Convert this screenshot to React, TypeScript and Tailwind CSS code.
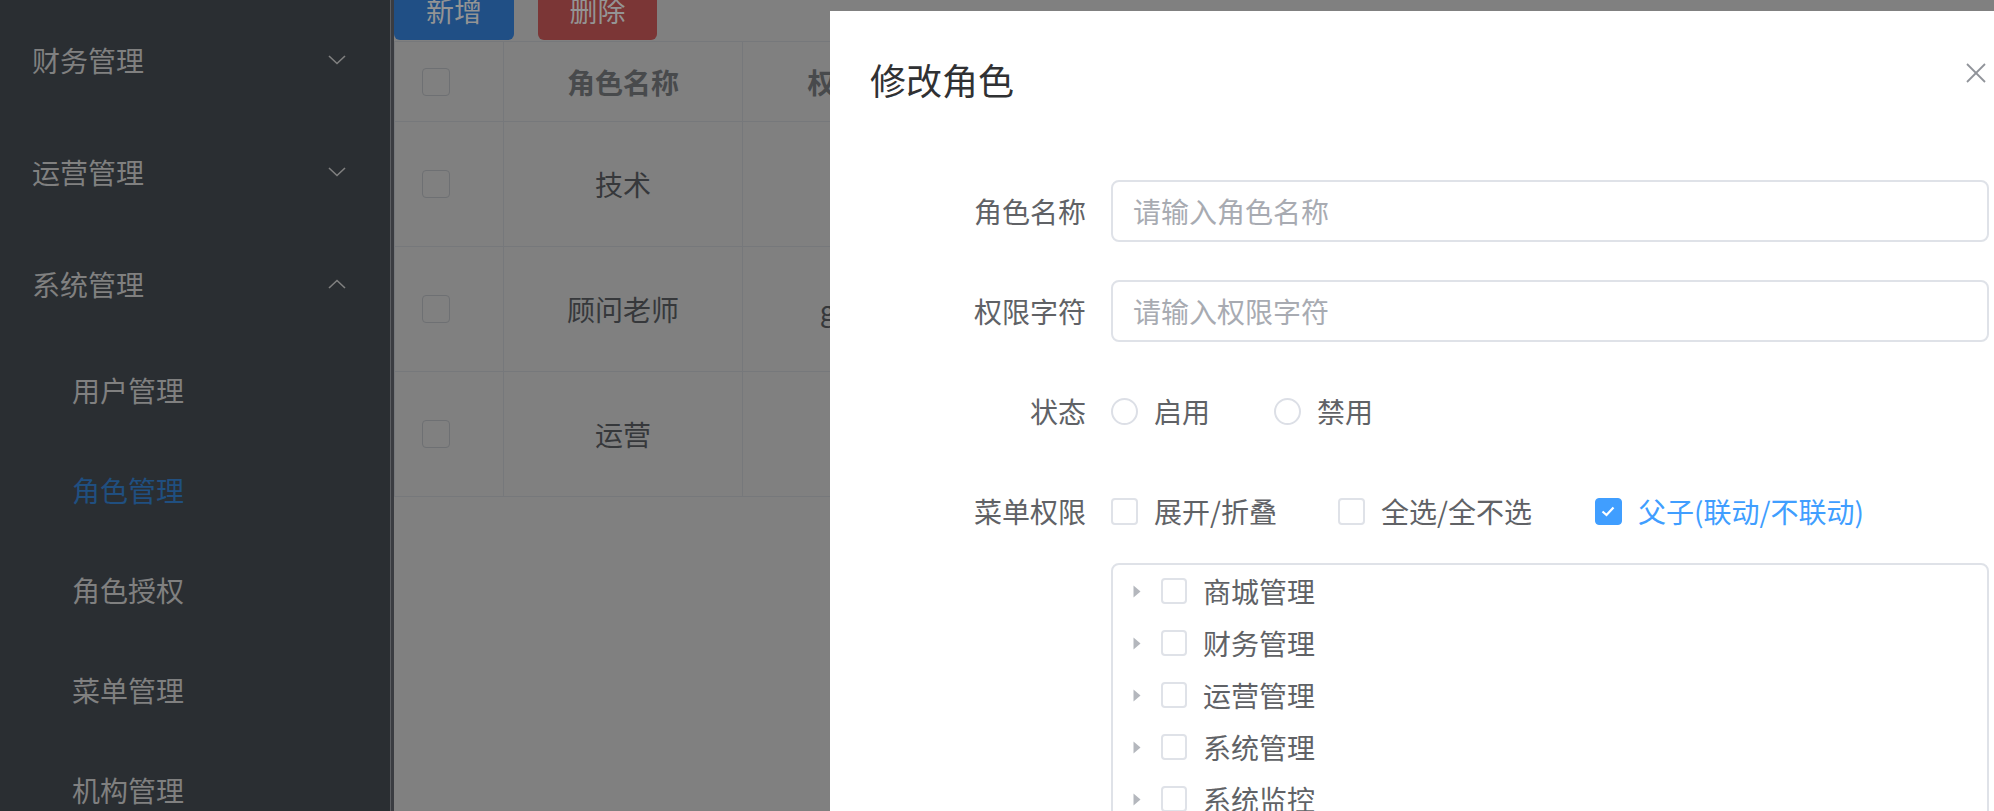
import React from 'react';

const menus = ['财务管理', '运营管理', '系统管理'];
const subMenus = ['用户管理', '角色管理', '角色授权', '菜单管理', '机构管理'];
const roles = [
  { name: '技术', key: 'js' },
  { name: '顾问老师', key: 'guwen' },
  { name: '运营', key: 'yy' },
];
const treeNodes = ['商城管理', '财务管理', '运营管理', '系统管理', '系统监控'];

function Chevron({ up }: { up?: boolean }) {
  return (
    <svg width="18" height="10" viewBox="0 0 18 10" fill="none" stroke="#808080" strokeWidth="1.6">
      {up ? <polyline points="1,9 9,1.5 17,9" /> : <polyline points="1,1 9,8.5 17,1" />}
    </svg>
  );
}

function Box({ checked, size = 27 }: { checked?: boolean; size?: number }) {
  if (checked) {
    return (
      <span
        className="flex items-center justify-center rounded-[4px] bg-[#409eff] border border-[#409eff] shrink-0"
        style={{ width: size, height: size }}
      >
        <svg width="14" height="11" viewBox="0 0 14 11" fill="none" stroke="white" strokeWidth="2.2">
          <polyline points="1.5,5.5 5.5,9 12.5,1.5" />
        </svg>
      </span>
    );
  }
  return (
    <span
      className="block rounded-[4px] border-2 border-[#dfe2e8] bg-white shrink-0"
      style={{ width: size, height: size }}
    />
  );
}

function Sidebar() {
  return (
    <div className="w-[390px] h-full shrink-0 bg-[#2a2e32] pt-[4px] text-[28px] text-[#808080]">
      {menus.map((m, i) => (
        <div key={m} className="h-[112px] flex items-center justify-between pl-[32px] pr-[44px]">
          <span>{m}</span>
          <Chevron up={i === 2} />
        </div>
      ))}
      {subMenus.map((s) => (
        <div
          key={s}
          className={`h-[100px] flex items-center pl-[72px] ${s === '角色管理' ? 'text-[#204f80]' : ''}`}
        >
          {s}
        </div>
      ))}
    </div>
  );
}

function Main() {
  return (
    <div className="flex-1 h-full bg-[#808080]">
      <div className="flex items-end gap-[24px] h-[40px]">
        <div className="w-[120px] h-[60px] shrink-0 rounded-[6px] bg-[#204f85] text-[#949494] text-[28px] flex items-center justify-center">
          新增
        </div>
        <div className="w-[119px] h-[60px] shrink-0 rounded-[6px] bg-[#7b3636] text-[#949494] text-[28px] flex items-center justify-center">
          删除
        </div>
      </div>
      <div className="mt-[1px] border-t border-l border-[#76787b] w-[800px]">
        <div className="flex h-[80px] border-b border-[#76787b] text-[28px] font-bold text-[#484a4c]">
          <div className="w-[109px] border-r border-[#76787b] flex items-center pl-[27px]">
            <span className="block w-[28px] h-[28px] rounded-[4px] border border-[#6e7073]" />
          </div>
          <div className="w-[239px] border-r border-[#76787b] flex items-center justify-center">角色名称</div>
          <div className="w-[242px] border-r border-[#76787b] flex items-center justify-center">权限字符</div>
        </div>
        {roles.map((r) => (
          <div key={r.name} className="flex h-[125px] border-b border-[#76787b] text-[28px] text-[#36383b]">
            <div className="w-[109px] border-r border-[#76787b] flex items-center pl-[27px]">
              <span className="block w-[28px] h-[28px] rounded-[4px] border border-[#6e7073]" />
            </div>
            <div className="w-[239px] border-r border-[#76787b] flex items-center justify-center">{r.name}</div>
            <div className="w-[242px] border-r border-[#76787b] flex items-center justify-center">{r.key}</div>
          </div>
        ))}
      </div>
    </div>
  );
}

function Label({ text }: { text: string }) {
  return <div className="w-[241px] shrink-0 pr-[25px] text-right text-[#606266]">{text}</div>;
}

function Dialog() {
  return (
    <div className="absolute left-[830px] top-[11px] w-[1196px] h-[900px] bg-white pl-[40px] pr-[37px] text-[28px]">
      <div className="relative pt-[44px]">
        <div className="text-[36px] leading-[48px] text-[#303133]">修改角色</div>
        <svg
          className="absolute left-[1096px] top-[52px]"
          width="20"
          height="20"
          viewBox="0 0 20 20"
          stroke="#909399"
          strokeWidth="1.8"
        >
          <line x1="1" y1="1" x2="19" y2="19" />
          <line x1="19" y1="1" x2="1" y2="19" />
        </svg>
      </div>

      <div className="mt-[77px] flex flex-col gap-[38px]">
        <div className="flex items-center h-[62px]">
          <Label text="角色名称" />
          <div className="flex-1 h-[62px] rounded-[8px] border-2 border-[#dfe2e8] flex items-center pl-[20px] text-[#a8abb2]">
            请输入角色名称
          </div>
        </div>
        <div className="flex items-center h-[62px]">
          <Label text="权限字符" />
          <div className="flex-1 h-[62px] rounded-[8px] border-2 border-[#dfe2e8] flex items-center pl-[20px] text-[#a8abb2]">
            请输入权限字符
          </div>
        </div>
        <div className="flex items-center h-[62px]">
          <Label text="状态" />
          <div className="flex items-center text-[#606266]">
            <span className="block w-[27px] h-[27px] rounded-full border-2 border-[#dcdfe6]" />
            <span className="ml-[16px] mr-[64px]">启用</span>
            <span className="block w-[27px] h-[27px] rounded-full border-2 border-[#dcdfe6]" />
            <span className="ml-[16px]">禁用</span>
          </div>
        </div>
        <div className="flex items-start">
          <div className="h-[62px] flex items-center">
            <Label text="菜单权限" />
          </div>
          <div className="flex-1">
            <div className="h-[62px] flex items-center text-[#606266]">
              <Box />
              <span className="ml-[16px] mr-[61px]">展开/折叠</span>
              <Box />
              <span className="ml-[16px] mr-[63px]">全选/全不选</span>
              <Box checked />
              <span className="ml-[16px] text-[#409eff]">父子(联动/不联动)</span>
            </div>
            <div className="mt-[21px] h-[400px] rounded-[8px] border-2 border-[#dfe2e8]">
              {treeNodes.map((n) => (
                <div key={n} className="h-[52px] flex items-center text-[#606266]">
                  <div className="w-[48px] flex justify-center">
                    <svg width="8" height="13" viewBox="0 0 8 13">
                      <polygon points="0.5,0.5 7.5,6.5 0.5,12.5" fill="#b4b7bd" />
                    </svg>
                  </div>
                  <Box size={26} />
                  <span className="ml-[16px]">{n}</span>
                </div>
              ))}
            </div>
          </div>
        </div>
      </div>
    </div>
  );
}

export default function App() {
  return (
    <div className="relative w-[1994px] h-[811px] overflow-hidden flex font-['Noto_Sans_CJK_SC','Noto_Sans',sans-serif]">
      <Sidebar />
      <div className="w-[4px] h-full shrink-0 bg-[#3a3c41] border-l border-[#5c5e62]" />
      <Main />
      <Dialog />
    </div>
  );
}
